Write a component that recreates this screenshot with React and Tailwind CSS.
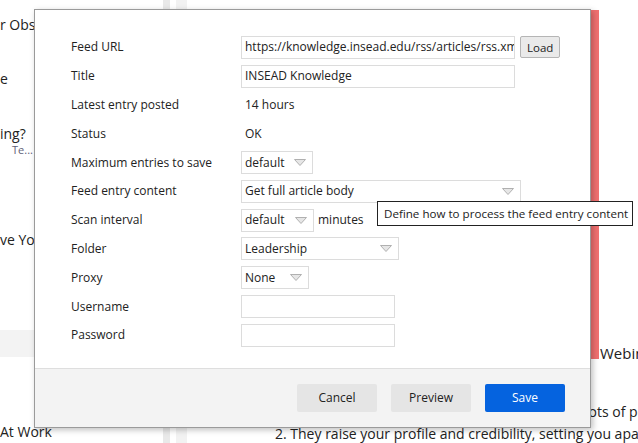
import React from "react";

const font = { fontFamily: '"Open Sans", "Noto Sans", sans-serif' };

function Arrow() {
  return (
    <svg width="12" height="7" viewBox="0 0 12 7" className="shrink-0">
      <polygon points="0.5,0.5 11.5,0.5 6,6.5" fill="#e6e6e6" stroke="#b0b0b0" strokeWidth="1" />
    </svg>
  );
}

function Select({ value, width }) {
  return (
    <div className={`flex items-center justify-between h-[23px] border border-[#dcdcdc] bg-white pl-[3px] pr-[6px] ${width}`}>
      <span>{value}</span>
      <Arrow />
    </div>
  );
}

function TextBox({ value, width }) {
  return (
    <div className={`h-[23px] border border-[#dcdcdc] bg-white px-[3px] flex items-center overflow-hidden whitespace-nowrap ${width}`}>
      {value}
    </div>
  );
}

function Row({ label, children }) {
  return (
    <>
      <div className="h-[28.8px] flex items-center">{label}</div>
      <div className="h-[28.8px] flex items-center gap-1">{children}</div>
    </>
  );
}

export default function App() {
  return (
    <div className="relative w-[638px] h-[443px] overflow-hidden bg-white text-[#222]" style={font}>
      {/* background page */}
      <div className="flex h-full">
        <div className="w-[163px] shrink-0 flex flex-col text-[14px] text-[#222] whitespace-nowrap">
          <div className="h-[8px]" />
          <div className="mt-[6px]">r Obstacles</div>
          <div className="mt-[33px]">e</div>
          <div className="mt-[34px]">ing?</div>
          <div className="text-[11px] text-[#5f5f78] pl-[12px] -mt-[2px]">Te...</div>
          <div className="mt-[70px]">ve You</div>
          <div className="mt-[80px] h-[27px] bg-[#f3f3f3]" />
          <div className="mt-[64px]">At Work</div>
        </div>
        <div className="w-[7px] shrink-0 bg-[#e9e9e9]" />
        <div className="w-[6px] shrink-0 bg-white" />
        <div className="w-[11px] shrink-0 bg-[#f2f2f2]" />
        <div className="flex-1 min-w-0 flex flex-col text-[14px] text-[#222] whitespace-nowrap">
          <div className="flex items-end mt-[10px]">
            <div className="w-[403px] h-[349px] shrink-0" />
            <div className="w-[9px] h-[349px] shrink-0 bg-[#f07070]" />
            <div className="text-[15px] leading-none -mb-[2px] pl-[1px] shrink-0">Webinars</div>
          </div>
          <div className="mt-[42px] pl-[197px]">1. Webinars give you access to lots of potential</div>
          <div className="pl-[88px] mt-[1px]">2. They raise your profile and credibility, setting you apart</div>
        </div>
      </div>

      {/* dialog */}
      <div className="absolute left-[34px] top-[9px] w-[557px] h-[419px] bg-white border border-[#9a9a9a] shadow-[2px_2px_6px_rgba(0,0,0,0.25)] flex flex-col text-[12px] text-[#222]">
        <div className="flex-1 grid grid-cols-[170px_1fr] content-start pl-[36px] pt-[23px]">
          <Row label="Feed URL">
            <TextBox width="w-[274px]" value="https://knowledge.insead.edu/rss/articles/rss.xml" />
            <div className="ml-[1px] h-[22px] px-[6px] flex items-center border border-[#b5b5b5] rounded-[2px] bg-[#eaeaea] text-[11.5px]">Load</div>
          </Row>
          <Row label="Title">
            <TextBox width="w-[274px]" value="INSEAD Knowledge" />
          </Row>
          <Row label="Latest entry posted">
            <span className="pl-[4px]">14 hours</span>
          </Row>
          <Row label="Status">
            <span className="pl-[4px]">OK</span>
          </Row>
          <Row label="Maximum entries to save">
            <Select value="default" width="w-[72px]" />
          </Row>
          <Row label="Feed entry content">
            <Select value="Get full article body" width="w-[280px]" />
          </Row>
          <Row label="Scan interval">
            <Select value="default" width="w-[73px]" />
            <span>minutes</span>
          </Row>
          <Row label="Folder">
            <Select value="Leadership" width="w-[158px]" />
          </Row>
          <Row label="Proxy">
            <Select value="None" width="w-[68px]" />
          </Row>
          <Row label="Username">
            <TextBox width="w-[154px]" value="" />
          </Row>
          <Row label="Password">
            <TextBox width="w-[154px]" value="" />
          </Row>
        </div>
        <div className="h-[59px] border-t border-[#dedede] bg-[#f3f3f3] flex items-center justify-end gap-[14px] pr-[25px]">
          <div className="w-[80px] h-[28px] rounded-[2px] bg-[#e5e5e5] flex items-center justify-center">Cancel</div>
          <div className="w-[80px] h-[28px] rounded-[2px] bg-[#e5e5e5] flex items-center justify-center">Preview</div>
          <div className="w-[80px] h-[28px] rounded-[2px] bg-[#0563df] text-white flex items-center justify-center">Save</div>
        </div>
      </div>

      {/* tooltip */}
      <div className="absolute left-[377px] top-[201px] w-[256px] h-[25px] px-[6px] flex items-center bg-white border border-[#222] text-[11.6px] text-[#222] whitespace-nowrap">
        Define how to process the feed entry content
      </div>
    </div>
  );
}
